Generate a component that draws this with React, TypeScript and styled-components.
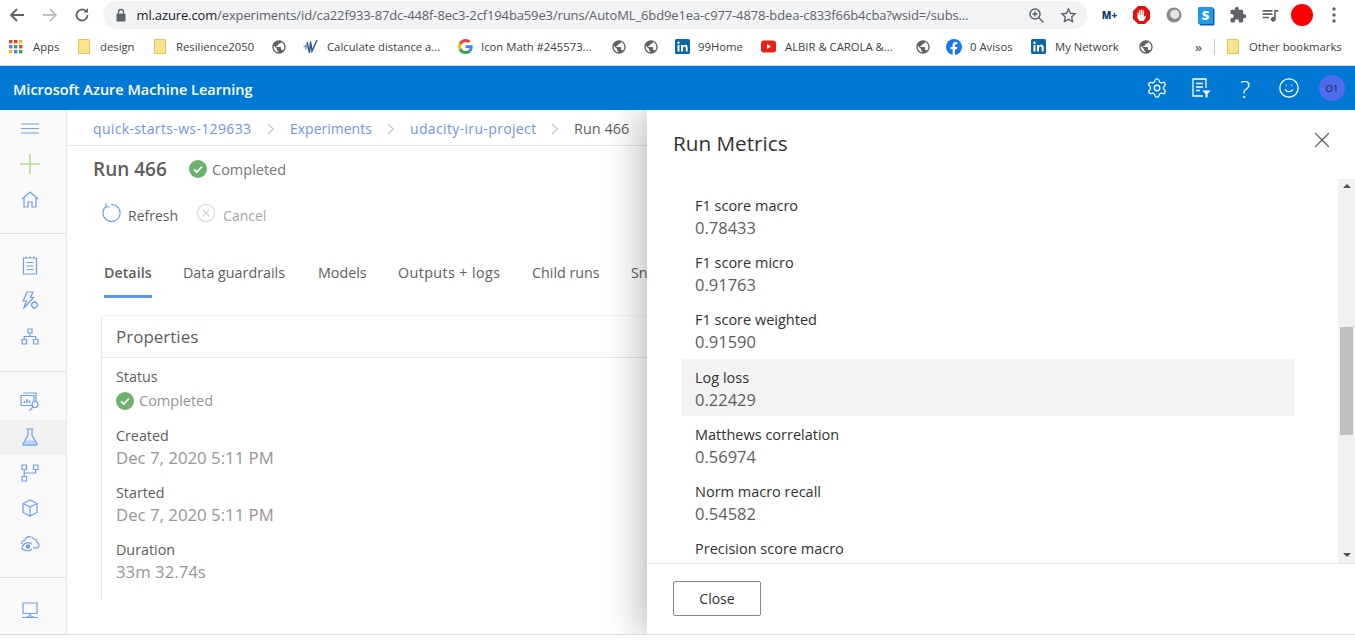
import React from "react";
import styled, { createGlobalStyle } from "styled-components";
import { Settings, Smile, X } from "lucide-react";

const UI_FONT = `"Open Sans", "Noto Sans", "Liberation Sans", sans-serif`;

const GlobalStyle = createGlobalStyle`
  html, body {
    margin: 0;
    padding: 0;
    background: #fff;
    overflow: hidden;
  }
  * {
    box-sizing: border-box;
  }
`;

const GLOBE =
  "M12 2C6.48 2 2 6.48 2 12s4.48 10 10 10 10-4.48 10-10S17.52 2 12 2zm-1 17.93c-3.95-.49-7-3.85-7-7.93 0-.62.08-1.21.21-1.79L9 15v1c0 1.1.9 2 2 2v1.93zm6.9-2.54c-.26-.81-1-1.39-1.9-1.39h-1v-3c0-.55-.45-1-1-1H8v-2h2c.55 0 1-.45 1-1V7h2c1.1 0 2-.9 2-2v-.41c2.93 1.19 5 4.06 5 7.41 0 2.08-.8 3.97-2.1 5.39z";
const PUZZLE =
  "M20.5 11H19V7c0-1.1-.9-2-2-2h-4V3.5C13 2.12 11.88 1 10.5 1S8 2.12 8 3.5V5H4c-1.1 0-1.99.9-1.99 2v3.8H3.5c1.49 0 2.7 1.21 2.7 2.7s-1.21 2.7-2.7 2.7H2V20c0 1.1.9 2 2 2h3.8v-1.5c0-1.49 1.21-2.7 2.7-2.7 1.49 0 2.7 1.21 2.7 2.7V22H17c1.1 0 2-.9 2-2v-4h1.5c1.38 0 2.5-1.12 2.5-2.5S21.88 11 20.5 11z";
const QUEUE =
  "M15 6H3v2h12V6zm0 4H3v2h12v-2zM3 16h8v-2H3v2zM17 6v8.18c-.31-.11-.65-.18-1-.18-1.66 0-3 1.34-3 3s1.34 3 3 3 3-1.34 3-3V8h3V6h-5z";

const Globe = () => (
  <svg width="16" height="16" viewBox="0 0 24 24" fill="#5f6368">
    <path d={GLOBE} />
  </svg>
);

const Folder = () => (
  <svg width="16" height="17" viewBox="0 0 16 17">
    <path d="M1.500 1.500h10a1 1 0 0 1 1 1v13h-10.500a.5.5 0 0 1-.5-.5z" fill="#fbe28f" stroke="#e6c65c" />
    <path d="M10 15.500l2.500-2.500v2.500z" fill="#e6c65c" />
  </svg>
);

const AppsGrid = () => (
  <svg width="14" height="14" viewBox="0 0 14 14">
    {["#ea4335", "#ea4335", "#fbbc05", "#4285f4", "#34a853", "#ea4335", "#fbbc05", "#4285f4", "#34a853"].map((c, i) => (
      <rect key={i} x={(i % 3) * 5} y={Math.floor(i / 3) * 5} width="3.400" height="3.400" fill={c} />
    ))}
  </svg>
);

const GoogleG = () => (
  <svg width="15" height="15" viewBox="0 0 48 48">
    <path fill="#ea4335" d="M24 9.500c3.500 0 6.700 1.200 9.200 3.600l6.900-6.900C35.900 2.400 30.500 0 24 0 14.600 0 6.500 5.400 2.600 13.200l8 6.200C12.500 13.700 17.800 9.500 24 9.500z" />
    <path fill="#4285f4" d="M47 24.500c0-1.600-.1-3.100-.4-4.500H24v9h13c-.6 3-2.200 5.500-4.800 7.200l7.700 6C44.400 38 47 31.800 47 24.500z" />
    <path fill="#fbbc05" d="M10.600 28.600c-.5-1.400-.8-3-.8-4.600s.3-3.200.8-4.600l-8-6.200C.9 16.500 0 20.100 0 24s.9 7.500 2.600 10.800l8-6.200z" />
    <path fill="#34a853" d="M24 48c6.500 0 11.900-2.100 15.900-5.800l-7.700-6c-2.100 1.500-4.900 2.300-8.200 2.300-6.200 0-11.500-4.200-13.400-9.900l-8 6.200C6.500 42.600 14.600 48 24 48z" />
  </svg>
);

const CalcLogo = () => (
  <svg width="15" height="16" viewBox="0 0 15 16" fill="none" stroke="#24518f" strokeWidth="1.400">
    <path d="M4 3l2.500 11L7.500 2.500 9 12l5-11" />
    <path d="M0.500 7.500h6" stroke="#6d93c7" />
    <path d="M3 5.500v5" stroke="#6d93c7" />
  </svg>
);

const LinkedIn = () => (
  <svg width="15" height="15" viewBox="0 0 15 15">
    <rect width="15" height="15" rx="1.500" fill="#0a66a8" />
    <rect x="2.500" y="6" width="2" height="6.500" fill="#fff" />
    <circle cx="3.500" cy="3.800" r="1.200" fill="#fff" />
    <path d="M6 6h2v1c.5-.8 1.300-1.200 2.200-1.200 1.700 0 2.500 1.100 2.500 2.900v3.800h-2V9c0-.9-.3-1.500-1.100-1.500S8 8.100 8 9v3.500H6z" fill="#fff" />
  </svg>
);

const YouTube = () => (
  <svg width="15" height="15" viewBox="0 0 15 15">
    <rect y="1.500" width="15" height="12" rx="3" fill="#e62117" />
    <path d="M6 5l4 2.500L6 10z" fill="#fff" />
  </svg>
);

const Facebook = () => (
  <svg width="16" height="16" viewBox="0 0 16 16">
    <circle cx="8" cy="8" r="8" fill="#1877f2" />
    <path d="M10.900 10.300l.4-2.300H9V6.500c0-.7.3-1.300 1.300-1.300h1V3.300s-.9-.2-1.800-.2C7.700 3.100 6.600 4.200 6.600 6.200V8H4.500v2.300h2.100V16h2.400v-5.700z" fill="#fff" />
  </svg>
);

interface BookmarkData {
  icon: React.ReactNode;
  label?: string;
  width: number;
  gap?: number;
}

const BOOKMARKS: BookmarkData[] = [
  { icon: <AppsGrid />, label: "Apps", width: 68, gap: 10 },
  { icon: <Folder />, label: "design", width: 76, gap: 7 },
  { icon: <Folder />, label: "Resilience2050", width: 118, gap: 7 },
  { icon: <Globe />, width: 32 },
  { icon: <CalcLogo />, label: "Calculate distance a...", width: 155, gap: 9 },
  { icon: <GoogleG />, label: "Icon Math #245573...", width: 153, gap: 8 },
  { icon: <Globe />, width: 32 },
  { icon: <Globe />, width: 32 },
  { icon: <LinkedIn />, label: "99Home", width: 86, gap: 8 },
  { icon: <YouTube />, label: "ALBIR & CAROLA &...", width: 154, gap: 9 },
  { icon: <Globe />, width: 31 },
  { icon: <Facebook />, label: "0 Avisos", width: 85, gap: 8 },
  { icon: <LinkedIn />, label: "My Network", width: 107, gap: 9 },
  { icon: <Globe />, width: 57 },
];

const BREADCRUMB = [
  { label: "quick-starts-ws-129633", width: 159, spacing: 0.35 },
  { label: "Experiments", width: 82, spacing: 0 },
  { label: "udacity-iru-project", width: 126, spacing: 0.35 },
];

const TABS = [
  { label: "Details", width: 48, spacing: 0 },
  { label: "Data guardrails", width: 104, spacing: 0 },
  { label: "Models", width: 49, spacing: 0 },
  { label: "Outputs + logs", width: 103, spacing: 0.4 },
  { label: "Child runs", width: 68, spacing: 0 },
  { label: "Sn", width: 30, spacing: 0 },
];

const PROPERTIES = [
  { label: "Created", value: "Dec 7, 2020 5:11 PM" },
  { label: "Started", value: "Dec 7, 2020 5:11 PM" },
  { label: "Duration", value: "33m 32.74s" },
];

const METRICS: { label: string; value?: string; active?: boolean }[] = [
  { label: "F1 score macro", value: "0.78433" },
  { label: "F1 score micro", value: "0.91763" },
  { label: "F1 score weighted", value: "0.91590" },
  { label: "Log loss", value: "0.22429", active: true },
  { label: "Matthews correlation", value: "0.56974" },
  { label: "Norm macro recall", value: "0.54582" },
  { label: "Precision score macro" },
];

const navStroke = {
  fill: "none",
  stroke: "#6f9fe8",
  strokeWidth: 1.2,
};

const NavIcons = {
  menu: (
    <svg width="18" height="11" viewBox="0 0 18 11" {...navStroke}>
      <path d="M0 1h18M0 5.500h18M0 10h18" />
    </svg>
  ),
  plus: (
    <svg width="20" height="20" viewBox="0 0 20 20" fill="none" stroke="#b3dd84" strokeWidth="1.500">
      <path d="M10 0v20M0 10h20" />
    </svg>
  ),
  home: (
    <svg width="18" height="17" viewBox="0 0 18 17" {...navStroke}>
      <path d="M1 8l8-7 8 7M3 6.500V16h4v-5h4v5h4V6.500" />
    </svg>
  ),
  notebook: (
    <svg width="16" height="19" viewBox="0 0 16 19" {...navStroke}>
      <path d="M1.500 2h13v16h-13zM4 .5V2M8 .5V2M12 .5V2M4.500 6.500h7M4.500 10h7M4.500 13.500h7" />
    </svg>
  ),
  bolt: (
    <svg width="18" height="19" viewBox="0 0 18 19" {...navStroke}>
      <path d="M6 1h6L9.500 6.500h3l-10 11L5.500 10H2z" />
      <circle cx="13.500" cy="14" r="2.800" />
      <path d="M13.500 10v1.200M13.500 16.800V18M9.500 14h1.200M16.300 14h1.200" />
    </svg>
  ),
  org: (
    <svg width="18" height="17" viewBox="0 0 18 17" {...navStroke}>
      <path d="M7 1h4v4H7zM1 11.500h4.500V16H1zM12.500 11.500H17V16h-4.500zM9 5v3.500M3.200 11.500v-3h11.600v3" />
    </svg>
  ),
  monitor: (
    <svg width="20" height="19" viewBox="0 0 20 19" {...navStroke}>
      <path d="M3 1h13v9M1 3.500h13v10H1z" />
      <path d="M4.500 11V9M7 11V7M9.500 11V8.500" strokeWidth="1.500" />
      <circle cx="15" cy="12.500" r="3" fill="#fafafa" />
      <path d="M13 15l-3.500 3.500" />
    </svg>
  ),
  flask: (
    <svg width="16" height="18" viewBox="0 0 16 18" {...navStroke}>
      <path d="M3.300 12.500h9.400L15 17H1z" fill="#bcd3f5" stroke="none" />
      <path d="M4.500 1h7M6 1v6L1 16a.8.8 0 0 0 .7 1.200h12.600A.8.800 0 0 0 15 16L10 7V1" />
    </svg>
  ),
  pipeline: (
    <svg width="18" height="18" viewBox="0 0 18 18" {...navStroke}>
      <path d="M1 1h4.500v4.500H1zM12.500 1H17v4.500h-4.500zM1 12.500h4.500V17H1zM3.200 5.500v7M3.200 9h11.500V5.500" />
    </svg>
  ),
  cube: (
    <svg width="16" height="18" viewBox="0 0 16 18" {...navStroke}>
      <path d="M8 1l7 3.500v9L8 17l-7-3.500v-9zM1 4.500L8 8l7-3.500M8 8v9" />
    </svg>
  ),
  cloud: (
    <svg width="20" height="18" viewBox="0 0 20 18" {...navStroke}>
      <path d="M5 5.500a4.500 4.500 0 0 1 8.500-1.500 3.500 3.500 0 0 1 3.500 3.500 2.700 2.700 0 0 1-.5 5.300h-3.500" />
      <path d="M5 5.500a3.200 3.200 0 0 0-3.500 3.500" />
      <circle cx="8" cy="11.500" r="1.700" fill="#6f9fe8" />
      <path d="M2.500 12a5.500 4.500 0 0 1 9-3.200M1.500 12.500a6 4.500 0 0 0 10.500 1.500" />
    </svg>
  ),
  desktop: (
    <svg width="18" height="17" viewBox="0 0 18 17" {...navStroke}>
      <path d="M2 1h14v10.500H2zM9 11.500V14M1 15.500h16M5 15.500l3-1.500h2l3 1.500" />
    </svg>
  ),
};

const NAV_GROUPS: { key: keyof typeof NavIcons; active?: boolean }[][] = [
  [{ key: "menu" }, { key: "plus" }, { key: "home" }],
  [{ key: "notebook" }, { key: "bolt" }, { key: "org" }],
  [{ key: "monitor" }, { key: "flask", active: true }, { key: "pipeline" }, { key: "cube" }, { key: "cloud" }],
  [{ key: "desktop" }],
];

const CheckBadge = () => (
  <svg width="18" height="18" viewBox="0 0 18 18">
    <circle cx="9" cy="9" r="9" fill="#6bb26f" />
    <path d="M5 9.300l2.800 2.700L13 6.500" fill="none" stroke="#fff" strokeWidth="1.800" />
  </svg>
);

const Chevron = () => (
  <svg width="8" height="12" viewBox="0 0 8 12" fill="none" stroke="#a8a6a4" strokeWidth="1">
    <path d="M1 1l5.500 5L1 11" />
  </svg>
);

const App = () => {
  return (
    <Page>
      <GlobalStyle />
      <BrowserBar>
        <NavButton>
          <svg width="16" height="16" viewBox="0 0 16 16" fill="none" stroke="#5f6368" strokeWidth="1.800">
            <path d="M15 8H2M8 2L2 8l6 6" />
          </svg>
        </NavButton>
        <NavButton>
          <svg width="16" height="16" viewBox="0 0 16 16" fill="none" stroke="#bdc1c6" strokeWidth="1.800">
            <path d="M1 8h13M8 2l6 6-6 6" />
          </svg>
        </NavButton>
        <NavButton>
          <svg width="16" height="16" viewBox="0 0 16 16" fill="none" stroke="#5f6368" strokeWidth="1.800">
            <path d="M13.500 8a5.500 5.500 0 1 1-1.600-3.900" />
            <path d="M14 1v4.500H9.500z" fill="#5f6368" stroke="none" />
          </svg>
        </NavButton>
        <Omnibox>
          <svg width="12" height="14" viewBox="0 0 12 14">
            <rect x="1.500" y="5.500" width="9" height="8" rx="1" fill="#5f6368" />
            <path d="M3.500 5.500V4a2.500 2.500 0 0 1 5 0v1.500" fill="none" stroke="#5f6368" strokeWidth="1.300" />
          </svg>
          <UrlText>
            <UrlHost>ml.azure.com</UrlHost>
            /experiments/id/ca22f933-87dc-448f-8ec3-2cf194ba59e3/runs/AutoML_6bd9e1ea-c977-4878-bdea-c833f66b4cba?wsid=/subs...
          </UrlText>
          <OmniActions>
            <svg width="17" height="17" viewBox="0 0 17 17" fill="none" stroke="#5f6368" strokeWidth="1.500">
              <circle cx="7" cy="7" r="5" />
              <path d="M10.800 10.800L15.500 15.500M7 4.500v5M4.500 7h5" />
            </svg>
            <svg width="17" height="17" viewBox="0 0 24 24" fill="none" stroke="#5f6368" strokeWidth="2">
              <path d="M12 3l2.800 5.900 6.400.8-4.700 4.400 1.200 6.400L12 17.400l-5.700 3.100 1.200-6.400L2.800 9.700l6.400-.8z" />
            </svg>
          </OmniActions>
        </Omnibox>
        <Extensions>
          <ExtSlot>
            <MovistarMark>M+</MovistarMark>
          </ExtSlot>
          <ExtSlot>
            <svg width="17" height="18" viewBox="0 0 17 18">
              <path d="M5 0h7l5 5v8l-5 5H5l-5-5V5z" fill="#e0120f" />
              <path d="M4.500 9.500V6.500h1.200v2.800h.5V4h1.300v5h.5V3.500H9.300V9h.5V4.500h1.300V11l1-1.300 1 .6-2.200 4.700H6.500l-2-3z" fill="#fff" />
            </svg>
          </ExtSlot>
          <ExtSlot>
            <svg width="16" height="16" viewBox="0 0 16 16">
              <circle cx="8" cy="8" r="7.500" fill="#8b8b8b" />
              <circle cx="8.800" cy="7.300" r="4.600" fill="#e4e4e4" />
            </svg>
          </ExtSlot>
          <ExtSlot>
            <SkypeTile>S</SkypeTile>
          </ExtSlot>
          <ExtSlot>
            <svg width="18" height="18" viewBox="0 0 24 24" fill="#5f6368">
              <path d={PUZZLE} />
            </svg>
          </ExtSlot>
          <ExtSlot>
            <svg width="20" height="20" viewBox="0 0 24 24" fill="#5f6368">
              <path d={QUEUE} />
            </svg>
          </ExtSlot>
          <ProfileDot />
          <ExtSlot>
            <svg width="4" height="16" viewBox="0 0 4 16" fill="#5f6368">
              <circle cx="2" cy="2" r="1.700" />
              <circle cx="2" cy="8" r="1.700" />
              <circle cx="2" cy="14" r="1.700" />
            </svg>
          </ExtSlot>
        </Extensions>
      </BrowserBar>

      <BookmarksBar>
        {BOOKMARKS.map((b, i) => (
          <Bookmark key={i} $width={b.width} $gap={b.gap}>
            {b.icon}
            {b.label && <span>{b.label}</span>}
          </Bookmark>
        ))}
        <MoreBookmarks>»</MoreBookmarks>
        <BarSeparator />
        <Bookmark $width={115} $gap={7}>
          <Folder />
          <span>Other bookmarks</span>
        </Bookmark>
      </BookmarksBar>

      <AppHeader>
        <Brand>Microsoft Azure Machine Learning</Brand>
        <HeaderIcons>
          <HeaderSlot>
            <Settings size={22} strokeWidth={1.4} />
          </HeaderSlot>
          <HeaderSlot>
            <svg width="21" height="21" viewBox="0 0 21 21" fill="none" stroke="#fff" strokeWidth="1.300">
              <path d="M12 18H2V1h13v9M5 5.500h7M5 9h7M5 12.500h4" />
              <path d="M11.500 12.500h8l-3 3.500v3.500h-2V16z" fill="#fff" stroke="none" />
            </svg>
          </HeaderSlot>
          <HeaderSlot>
            <HelpMark>?</HelpMark>
          </HeaderSlot>
          <HeaderSlot>
            <Smile size={22} strokeWidth={1.4} />
          </HeaderSlot>
          <Avatar>O1</Avatar>
        </HeaderIcons>
      </AppHeader>

      <Body>
        <SideNav>
          {NAV_GROUPS.map((group, i) => (
            <NavGroup key={i} $index={i}>
              {group.map((item) => (
                <NavItem key={item.key} $active={item.active}>
                  {NavIcons[item.key]}
                </NavItem>
              ))}
            </NavGroup>
          ))}
        </SideNav>

        <Main>
          <Breadcrumb>
            {BREADCRUMB.map((c) => (
              <React.Fragment key={c.label}>
                <Crumb $width={c.width} $spacing={c.spacing}>
                  {c.label}
                </Crumb>
                <Chevron />
              </React.Fragment>
            ))}
            <CurrentCrumb>Run 466</CurrentCrumb>
          </Breadcrumb>

          <TitleRow>
            <RunTitle>Run 466</RunTitle>
            <CheckBadge />
            <RunStatus>Completed</RunStatus>
          </TitleRow>

          <Commands>
            <CommandButton>
              <svg width="20" height="20" viewBox="0 0 20 20" fill="none" stroke="#6f9fe8" strokeWidth="1.200">
                <path d="M6 2.800A8.500 8.500 0 1 0 10 1.500" />
                <path d="M5 .5v3.500h3.500" />
              </svg>
              <CommandLabel>Refresh</CommandLabel>
            </CommandButton>
            <CommandButton $disabled>
              <svg width="20" height="20" viewBox="0 0 20 20" fill="none" stroke="#d6d6d6" strokeWidth="1.200">
                <circle cx="10" cy="10" r="8.500" />
                <path d="M6.500 6.500l7 7M13.500 6.500l-7 7" />
              </svg>
              <CommandLabel>Cancel</CommandLabel>
            </CommandButton>
          </Commands>

          <Tabs>
            {TABS.map((t, i) => (
              <Tab key={t.label} $active={i === 0} $width={t.width} $spacing={t.spacing}>
                {t.label}
              </Tab>
            ))}
          </Tabs>

          <PropertiesCard>
            <CardHeading>Properties</CardHeading>
            <CardBody>
              <PropLabel>Status</PropLabel>
              <PropStatus>
                <CheckBadge />
                Completed
              </PropStatus>
              {PROPERTIES.map((p) => (
                <React.Fragment key={p.label}>
                  <PropLabel>{p.label}</PropLabel>
                  <PropValue>{p.value}</PropValue>
                </React.Fragment>
              ))}
            </CardBody>
          </PropertiesCard>
        </Main>

        <Panel>
          <PanelHead>
            <PanelTitle>Run Metrics</PanelTitle>
            <CloseIcon>
              <X size={26} strokeWidth={1.1} />
            </CloseIcon>
          </PanelHead>
          <PanelScroll>
            <MetricList>
              {METRICS.map((m) => (
                <MetricRow key={m.label} $active={m.active}>
                  <MetricLabel>{m.label}</MetricLabel>
                  {m.value && <MetricValue>{m.value}</MetricValue>}
                </MetricRow>
              ))}
            </MetricList>
            <ScrollTrack>
              <ScrollArrow $up />
              <ScrollThumb />
              <ScrollArrow />
            </ScrollTrack>
          </PanelScroll>
          <PanelFoot>
            <CloseButton>Close</CloseButton>
          </PanelFoot>
        </Panel>
      </Body>
      <BottomEdge />
    </Page>
  );
};

const Page = styled.div`
  width: 1355px;
  height: 641px;
  display: flex;
  flex-direction: column;
  overflow: hidden;
  background: #fff;
  font-family: ${UI_FONT};
`;

const BrowserBar = styled.div`
  height: 33px;
  flex: none;
  display: flex;
  align-items: flex-start;
  padding: 1px 0 0 1px;
`;

const NavButton = styled.div`
  width: 32.500px;
  height: 28px;
  display: flex;
  align-items: center;
  justify-content: center;
`;

const Omnibox = styled.div`
  width: 984px;
  height: 28px;
  margin-left: 4px;
  display: flex;
  align-items: center;
  padding: 0 10px 0 12px;
  background: #f1f3f4;
  border-radius: 14px;
`;

const UrlText = styled.div`
  flex: 1;
  margin-left: 10px;
  font-size: 13px;
  color: #5f6368;
  white-space: nowrap;
  overflow: hidden;
  letter-spacing: -0.13px;
`;

const UrlHost = styled.span`
  color: #202124;
`;

const OmniActions = styled.div`
  display: flex;
  align-items: center;
  gap: 15px;
`;

const Extensions = styled.div`
  display: flex;
  align-items: center;
  height: 28px;
  margin-left: 7px;
`;

const ExtSlot = styled.div`
  width: 32px;
  height: 28px;
  display: flex;
  align-items: center;
  justify-content: center;
`;

const MovistarMark = styled.span`
  font-size: 10px;
  font-weight: 800;
  color: #123f78;
`;

const SkypeTile = styled.span`
  width: 15px;
  height: 17px;
  display: flex;
  align-items: center;
  justify-content: center;
  background: #1e9be8;
  border-radius: 1px;
  box-shadow: 1.500px 1.500px 0 #0f5f9e;
  font-size: 13px;
  font-weight: 800;
  color: #fff;
`;

const ProfileDot = styled.div`
  width: 22px;
  height: 22px;
  margin: 0 5px;
  border-radius: 50%;
  background: #ff0000;
`;

const BookmarksBar = styled.div`
  height: 33px;
  flex: none;
  display: flex;
  align-items: center;
  padding: 0 0 5px 9px;
  border-bottom: 1px solid #d9dbde;
`;

const Bookmark = styled.div<{ $width: number; $gap?: number }>`
  flex: none;
  width: ${(p) => p.$width}px;
  display: flex;
  align-items: center;
  gap: ${(p) => p.$gap ?? 0}px;
  font-size: 11.300px;
  color: #3c4043;
  white-space: nowrap;

  svg {
    flex: none;
  }
`;

const MoreBookmarks = styled.div`
  width: 19px;
  font-size: 13px;
  font-weight: 600;
  color: #5f6368;
`;

const BarSeparator = styled.div`
  width: 1px;
  height: 16px;
  margin-right: 11px;
  background: #c8cacd;
`;

const AppHeader = styled.header`
  height: 44px;
  flex: none;
  display: flex;
  align-items: center;
  justify-content: space-between;
  padding: 0 10px 0 13px;
  background: #0078d4;
  color: #fff;
`;

const Brand = styled.div`
  padding-top: 2px;
  font-size: 14.500px;
  font-weight: 600;
`;

const HeaderIcons = styled.div`
  display: flex;
  align-items: center;
`;

const HeaderSlot = styled.div`
  width: 44px;
  height: 44px;
  display: flex;
  align-items: center;
  justify-content: center;
`;

const HelpMark = styled.span`
  font-size: 24px;
  font-weight: 300;
`;

const Avatar = styled.div`
  width: 26px;
  height: 26px;
  margin-left: 8px;
  display: flex;
  align-items: center;
  justify-content: center;
  border-radius: 50%;
  background: #4f6bed;
  font-size: 9.500px;
  color: #1b1a19;
`;

const Body = styled.div`
  position: relative;
  height: 524px;
  flex: none;
  display: flex;
  overflow: hidden;
`;

const SideNav = styled.nav`
  width: 67px;
  flex: none;
  background: #fafafa;
  border-right: 1px solid #e6e6e6;
`;

const GROUP_PADDING = ["1px 0 15px", "14px 0 17px", "12px 0 15px", "15px 0 0"];

const NavGroup = styled.div<{ $index: number }>`
  padding: ${(p) => GROUP_PADDING[p.$index]};
  border-top: ${(p) => (p.$index > 0 ? "1px solid #e4e4e4" : "none")};
`;

const NavItem = styled.div<{ $active?: boolean }>`
  height: 35.500px;
  display: flex;
  align-items: center;
  justify-content: center;
  padding-right: 6px;
  background: ${(p) => (p.$active ? "#f1f1f1" : "transparent")};
`;

const Main = styled.main`
  flex: 1;
  min-width: 0;
  padding-left: 26px;
`;

const Breadcrumb = styled.div`
  height: 36px;
  margin-left: -26px;
  padding: 2px 0 0 26px;
  display: flex;
  align-items: center;
  gap: 15px;
  border-bottom: 1px solid #e6e6e6;
  font-size: 14px;
  white-space: nowrap;
`;

const Crumb = styled.span<{ $width: number; $spacing: number }>`
  width: ${(p) => p.$width}px;
  letter-spacing: ${(p) => p.$spacing}px;
  color: #6f96e0;
`;

const CurrentCrumb = styled.span`
  font-size: 14.500px;
  color: #605e5c;
`;

const TitleRow = styled.div`
  height: 46px;
  display: flex;
  align-items: center;
  color: #605e5c;
`;

const RunTitle = styled.div`
  width: 96px;
  font-size: 19px;
  font-weight: 600;
`;

const RunStatus = styled.div`
  margin-left: 5px;
  font-size: 14.500px;
  color: #797775;
`;

const Commands = styled.div`
  height: 44px;
  display: flex;
  align-items: center;
  gap: 18px;
  padding-left: 8px;
`;

const CommandButton = styled.div<{ $disabled?: boolean }>`
  display: flex;
  align-items: center;
  gap: 7px;
  font-size: 14px;
  color: ${(p) => (p.$disabled ? "#a8a6a4" : "#605e5c")};

  svg {
    margin-top: -2px;
  }
`;

const CommandLabel = styled.span`
  padding-top: 2px;
`;

const Tabs = styled.div`
  height: 54px;
  margin-top: 9px;
  display: flex;
  align-items: flex-start;
  gap: 31px;
  padding: 18px 0 0 11px;
  white-space: nowrap;
`;

const Tab = styled.div<{ $active?: boolean; $width: number; $spacing: number }>`
  width: ${(p) => p.$width}px;
  flex: none;
  height: 35px;
  font-size: 14.300px;
  letter-spacing: ${(p) => p.$spacing}px;
  font-weight: ${(p) => (p.$active ? 600 : 400)};
  color: #605e5c;
  border-bottom: ${(p) => (p.$active ? "3px solid #5f95e6" : "none")};
`;

const PropertiesCard = styled.section`
  margin: 16px 0 0 8px;
  height: 285px;
  border-left: 1px solid #e8e8e8;
  border-top: 1px solid #f4f4f4;
`;

const CardHeading = styled.div`
  height: 42px;
  display: flex;
  align-items: center;
  padding-left: 14px;
  border-bottom: 1px solid #e6e6e6;
  font-size: 17px;
  color: #605e5c;
`;

const CardBody = styled.div`
  padding: 7px 0 0 14px;
`;

const PropLabel = styled.div`
  height: 21px;
  padding-top: 2px;
  display: flex;
  align-items: center;
  font-size: 14.300px;
  color: #605e5c;
`;

const PropStatus = styled.div`
  height: 27px;
  padding-top: 2px;
  margin-bottom: 11px;
  display: flex;
  align-items: center;
  gap: 5px;
  font-size: 14.500px;
  color: #979593;
`;

const PropValue = styled.div`
  height: 25px;
  margin-bottom: 11px;
  display: flex;
  align-items: center;
  font-size: 16.800px;
  color: #979593;
  white-space: nowrap;
`;

const Panel = styled.aside`
  position: absolute;
  top: 0;
  right: 0;
  bottom: 0;
  width: 708px;
  display: flex;
  flex-direction: column;
  background: #fff;
  box-shadow: -6px 0 36px rgba(0, 0, 0, 0.28);
`;

const PanelHead = styled.div`
  height: 69px;
  flex: none;
  display: flex;
  align-items: flex-start;
  justify-content: space-between;
  padding: 16px 20px 0 26px;
`;

const PanelTitle = styled.h2`
  margin: 0;
  font-size: 20.700px;
  line-height: 34px;
  font-weight: 400;
  color: #323130;
`;

const CloseIcon = styled.div`
  margin-top: 1px;
  color: #605e5c;
  display: flex;
`;

const PanelScroll = styled.div`
  height: 385px;
  flex: none;
  display: flex;
  border-bottom: 1px solid #e6e6e6;
`;

const MetricList = styled.div`
  flex: 1;
  overflow: hidden;
  padding: 8px 44px 0 35px;
`;

const MetricRow = styled.div<{ $active?: boolean }>`
  height: 57.200px;
  padding: 9px 0 0 13px;
  background: ${(p) => (p.$active ? "#f3f3f3" : "transparent")};
`;

const MetricLabel = styled.div`
  height: 19px;
  line-height: 19px;
  font-size: 14.500px;
  color: #323130;
`;

const MetricValue = styled.div`
  height: 26px;
  line-height: 26px;
  font-size: 16.500px;
  color: #605e5c;
`;

const ScrollTrack = styled.div`
  width: 17px;
  flex: none;
  display: flex;
  flex-direction: column;
  align-items: center;
  background: #f1f1f1;
`;

const ScrollArrow = styled.div<{ $up?: boolean }>`
  width: 0;
  height: 0;
  flex: none;
  margin: ${(p) => (p.$up ? "5px 0 0" : "auto 0 6px")};
  border-left: 4px solid transparent;
  border-right: 4px solid transparent;
  border-bottom: ${(p) => (p.$up ? "4px solid #505050" : "none")};
  border-top: ${(p) => (p.$up ? "none" : "4px solid #505050")};
`;

const ScrollThumb = styled.div`
  width: 13px;
  height: 108px;
  flex: none;
  margin-top: 139px;
  background: #c1c1c1;
`;

const PanelFoot = styled.div`
  flex: 1;
  padding: 17px 0 0 26px;
`;

const CloseButton = styled.button`
  width: 88px;
  height: 35px;
  padding: 0;
  background: #fff;
  border: 1px solid #8a8886;
  border-radius: 2px;
  font-family: inherit;
  font-size: 14px;
  color: #323130;
`;

const BottomEdge = styled.div`
  flex: 1;
  border-top: 1px solid #dedede;
`;

export default App;
